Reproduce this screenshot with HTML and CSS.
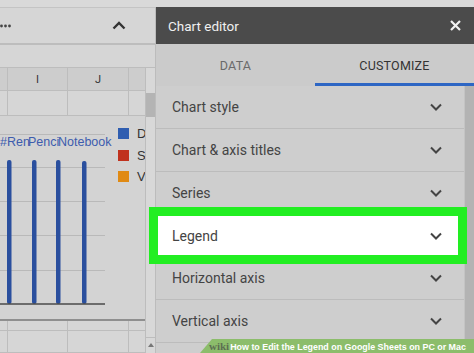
FILE: index.html
```html
<!DOCTYPE html>
<html lang="en">
<head>
    <meta charset="UTF-8">
    <meta name="viewport" content="width=device-width, initial-scale=1.0">
    <title>Chart editor</title>
    <link rel="stylesheet" href="styles.css">
</head>
<body>
    <div class="topstrip"></div>
    <div class="main">
        <div class="sheet">
            <div class="toolbar">
                <svg class="dots" width="12" height="4" viewBox="0 0 12 4"><g fill="#444"><circle cx="1.5" cy="2" r="1.4"/><circle cx="5.5" cy="2" r="1.4"/><circle cx="9.5" cy="2" r="1.4"/></g></svg>
                <svg class="up" width="14" height="9" viewBox="0 0 14 9"><path d="M1.5 7.5 L7 2 L12.5 7.5" fill="none" stroke="#333" stroke-width="2.4"/></svg>
            </div>
            <div class="formula"></div>
            <div class="sheet-body">
                <div class="grid">
                    <div class="row head">
                        <div class="cell c0"></div>
                        <div class="cell c1">I</div>
                        <div class="cell c2">J</div>
                        <div class="cell c3"></div>
                    </div>
                    <div class="row r1">
                        <div class="cell c0"></div>
                        <div class="cell c1"></div>
                        <div class="cell c2"></div>
                        <div class="cell c3"></div>
                    </div>
                    <svg class="chart" width="145" height="203" viewBox="0 0 145 203">
                        <g stroke="#b9b9b9" stroke-width="1">
                            <line x1="0" y1="18.5" x2="105" y2="18.5"/>
                            <line x1="0" y1="51.5" x2="105" y2="51.5"/>
                            <line x1="0" y1="85.5" x2="105" y2="85.5"/>
                            <line x1="0" y1="119.5" x2="105" y2="119.5"/>
                            <line x1="0" y1="154.5" x2="105" y2="154.5"/>
                        </g>
                        <g fill="#2a4f9e">
                            <rect x="7" y="44" width="4.5" height="144" rx="2"/>
                            <rect x="32" y="44" width="4.5" height="144" rx="2"/>
                            <rect x="56" y="44" width="4.5" height="144" rx="2"/>
                            <rect x="82" y="45" width="4.5" height="143" rx="2"/>
                        </g>
                        <line x1="0" y1="188" x2="105" y2="188" stroke="#4a4a4a" stroke-width="1.5"/>
                        <g class="xlabel">
                            <text x="0" y="30">#Ren</text>
                            <text x="28" y="30">Penci</text>
                            <text x="58" y="30">Notebook</text>
                        </g>
                        <rect x="118" y="12" width="11" height="11" fill="#2f5db0"/>
                        <rect x="118" y="34" width="11" height="11" fill="#c0321e"/>
                        <rect x="118" y="55" width="11" height="11" fill="#e08a14"/>
                        <g class="legend">
                            <text x="137" y="22">D</text>
                            <text x="137" y="44">S</text>
                            <text x="137" y="65">V</text>
                        </g>
                    </svg>
                    <div class="row r2">
                        <div class="cell c0"></div>
                        <div class="cell c1"></div>
                        <div class="cell c2"></div>
                        <div class="cell c3"></div>
                    </div>
                    <div class="row r3">
                        <div class="cell c0"></div>
                        <div class="cell c1"></div>
                        <div class="cell c2"></div>
                        <div class="cell c3"></div>
                    </div>
                </div>
                <div class="vscroll">
                    <div class="vthumb"></div>
                    <div class="vspace"></div>
                    <div class="varrow">
                        <svg width="6" height="4" viewBox="0 0 6 4"><path d="M0 4 L3 0 L6 4 Z" fill="#777"/></svg>
                    </div>
                </div>
            </div>
        </div>

        <div class="panel">
            <div class="panel-head">
                <span>Chart editor</span>
                <svg width="11" height="11" viewBox="0 0 11 11"><path d="M1 1 L10 10 M10 1 L1 10" stroke="#f2f2f2" stroke-width="2.2"/></svg>
            </div>
            <div class="tabs">
                <div class="tab">DATA</div>
                <div class="tab active">CUSTOMIZE</div>
            </div>
            <div class="list">
                <div class="items">
                    <div class="item">Chart style<svg class="chev" width="12" height="8" viewBox="0 0 12 8"><path d="M1 1.5 L6 6.5 L11 1.5" fill="none" stroke="#444" stroke-width="2"/></svg></div>
                    <div class="item">Chart &amp; axis titles<svg class="chev" width="12" height="8" viewBox="0 0 12 8"><path d="M1 1.5 L6 6.5 L11 1.5" fill="none" stroke="#444" stroke-width="2"/></svg></div>
                    <div class="item">Series<svg class="chev" width="12" height="8" viewBox="0 0 12 8"><path d="M1 1.5 L6 6.5 L11 1.5" fill="none" stroke="#444" stroke-width="2"/></svg></div>
                    <div class="item picked">Legend<svg class="chev" width="12" height="8" viewBox="0 0 12 8"><path d="M1 1.5 L6 6.5 L11 1.5" fill="none" stroke="#444" stroke-width="2"/></svg></div>
                    <div class="item">Horizontal axis<svg class="chev" width="12" height="8" viewBox="0 0 12 8"><path d="M1 1.5 L6 6.5 L11 1.5" fill="none" stroke="#444" stroke-width="2"/></svg></div>
                    <div class="item">Vertical axis<svg class="chev" width="12" height="8" viewBox="0 0 12 8"><path d="M1 1.5 L6 6.5 L11 1.5" fill="none" stroke="#444" stroke-width="2"/></svg></div>
                </div>
                <div class="pscroll"></div>
            </div>
        </div>
    </div>

    <div class="banner"><b class="wiki">wiki</b><b>How</b> to Edit the Legend on Google Sheets on PC or Mac</div>
</body>
</html>
```
FILE: styles.css
```css
body {
    margin: 0;
    width: 474px;
    height: 353px;
    overflow: hidden;
    position: relative;
    font-family: Roboto, "Liberation Sans", sans-serif;
    background-color: #d3d3d3;
}
.topstrip {
    height: 7px;
    background-color: #d9d9d9;
}
.main {
    display: flex;
    height: 346px;
}

/* spreadsheet side */
.sheet {
    width: 155px;
    display: flex;
    flex-direction: column;
    border-right: 1px solid #bcbcbc;
}
.toolbar {
    height: 35px;
    border-top: 1px solid #c4c4c4;
    border-bottom: 2px solid #bdbdbd;
    background-color: #d6d6d6;
    display: flex;
    align-items: center;
    justify-content: space-between;
    padding: 0 29px 0 0;
}
.dots {
    display: block;
    margin-top: 1px;
}
.formula {
    height: 22px;
    background-color: #d6d6d6;
}
.sheet-body {
    flex: 1;
    display: flex;
    border-top: 1px solid #bdbdbd;
}
.grid {
    width: 145px;
    display: flex;
    flex-direction: column;
}
.row {
    display: flex;
    border-bottom: 1px solid #bdbdbd;
}
.cell {
    border-right: 1px solid #bdbdbd;
    display: flex;
    align-items: center;
    justify-content: center;
    font-size: 11px;
    color: #333;
}
.c0 { width: 7px; }
.c1 { width: 59px; }
.c2 { width: 60px; }
.c3 { flex: 1; border-right: none; }
.head {
    height: 22px;
    background-color: #cdcdcd;
}
.r1 {
    height: 24px;
    background-color: #d6d6d6;
}
.chart {
    display: block;
    background-color: #d3d3d3;
    border-bottom: 2px solid #8f8f8f;
}
.xlabel text {
    font-family: "Liberation Sans", sans-serif;
    font-size: 12.5px;
    fill: #3d5cae;
}
.legend text {
    font-family: "Liberation Sans", sans-serif;
    font-size: 13px;
    fill: #333;
}
.r2 {
    height: 9px;
    background-color: #d6d6d6;
}
.r3 {
    flex: 1;
    background-color: #d6d6d6;
}
.vscroll {
    width: 10px;
    display: flex;
    flex-direction: column;
    border-left: 1px solid #bdbdbd;
    background-color: #d8d8d8;
}
.vthumb {
    height: 24px;
    margin-top: 25px;
    background-color: #b4b4b4;
}
.vspace {
    flex: 1;
}
.varrow {
    height: 14px;
    margin-bottom: 1px;
    border-top: 1px solid #bdbdbd;
    display: flex;
    align-items: center;
    justify-content: center;
}

/* chart editor panel */
.panel {
    flex: 1;
    display: flex;
    flex-direction: column;
    background-color: #cecece;
}
.panel-head {
    height: 37px;
    background-color: #4b4b4b;
    color: #f0f0f0;
    font-size: 13.5px;
    display: flex;
    align-items: center;
    justify-content: space-between;
    padding: 0 13px 0 12px;
}
.tabs {
    height: 42px;
    display: flex;
    background-color: #cbcbcb;
}
.tab {
    flex: 1;
    display: flex;
    align-items: center;
    justify-content: center;
    font-size: 12.5px;
    color: #6a6a6a;
    letter-spacing: 0.2px;
}
.tab.active {
    color: #333;
    border-bottom: 3px solid #2d66c4;
    padding-top: 3px;
}
.list {
    flex: 1;
    display: flex;
}
.items {
    flex: 1;
    display: flex;
    flex-direction: column;
}
.item {
    height: 42px;
    border-bottom: 1px solid #bcbcbc;
    display: flex;
    align-items: center;
    justify-content: space-between;
    padding: 0 22px 0 16px;
    font-size: 14px;
    color: #444;
    flex-shrink: 0;
}
.item.picked {
    height: 39px;
    margin: 1px 6px 2px 2px;
    padding: 0 16px 0 14px;
    background-color: #fff;
    border-bottom: none;
    outline: 9px solid #22ee22;
    position: relative;
    z-index: 1;
}
.pscroll {
    width: 9px;
    background-color: #b3b3b3;
    border-left: 1px solid #c4c4c4;
}

/* watermark */
.banner {
    position: absolute;
    right: 0;
    bottom: 0;
    height: 14px;
    width: 265px;
    padding-left: 9px;
    background-color: #8cbd6b;
    clip-path: polygon(12px 0, 100% 0, 100% 100%, 0 100%);
    font-family: "Liberation Sans", sans-serif;
    font-weight: bold;
    font-size: 8.9px;
    line-height: 14px;
    color: #fff;
    white-space: nowrap;
    z-index: 2;
}
.wiki {
    font-family: "Liberation Serif", serif;
    color: #5d6f52;
    font-size: 11px;
    margin-right: 1px;
}
```
